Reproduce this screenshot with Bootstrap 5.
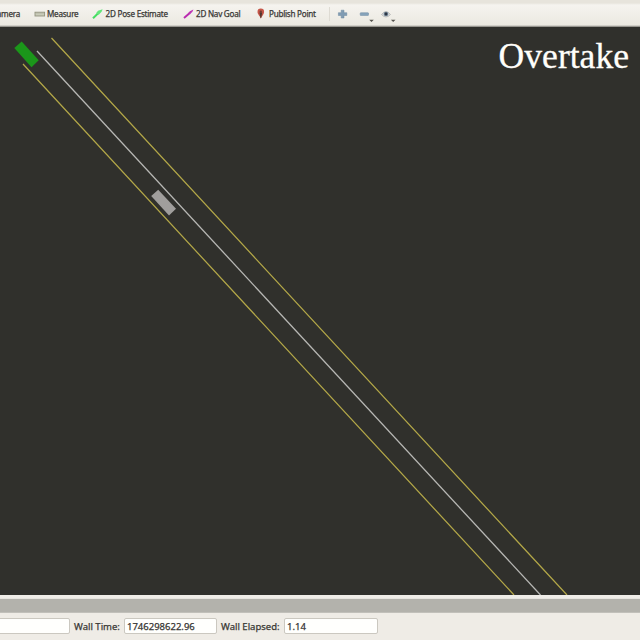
<!DOCTYPE html>
<html lang="en">
<head>
<meta charset="utf-8">
<meta name="viewport" content="width=device-width, initial-scale=1">
<title>Overtake</title>
<link href="https://cdn.jsdelivr.net/npm/bootstrap@5.3.0/dist/css/bootstrap.min.css" rel="stylesheet">
<style>
body{width:640px;height:640px;background:#efece6;color:#393835;font-family:"Noto Sans","Open Sans",sans-serif;font-size:8.1px;line-height:12px}
.tools{height:27px;background:linear-gradient(#e7e4dc 0 3px,#f5f3ef 5px,#ebe9e1 25px,#b8b6af 26px,#777670 27px)}
.tool{height:24px;white-space:nowrap;letter-spacing:-.24px;-webkit-text-stroke:.25px #393835}
.tool svg,.aux svg{display:block;flex:none}
.t-camera{width:34px}.t-camera span{margin-left:-12px;width:32px;text-align:right}
.t-measure{width:58px}.t-pose{width:91px}.t-nav{width:73px}.t-publish{width:73px}
.ico{width:13px}
.t-pose .ico{margin-right:.6px}
.divider{width:1px;height:14px;background:#dedbd3}
.viewport3d{height:568px;background:#30302c}
.viewport3d svg{display:block}
.heading{top:9px;right:11px;font:35.6px/40px "Liberation Serif",serif;color:#fffefa;-webkit-text-stroke:.3px #fffefa}
.splitter{height:18px;background:linear-gradient(#efede8 0 3px,#deddd7 4px,#b3b2ac 4px 17px,#d0cec8 18px)}
.timebar{height:27px;padding-top:5px;font-size:9.5px;-webkit-text-stroke:.25px #393835}
.field{height:16px;border:1px solid #cbc8c0;border-radius:2px;background:#fffffd;line-height:15px;padding-left:2px;color:#343330;white-space:nowrap}
.f-left{width:72px;margin-left:-2px}.f-time{width:93px}.f-elapsed{width:94px}
.l-time{width:54px;padding-left:4px}.l-elapsed{width:67px;padding-left:4px}
.timebar .lbl{height:16px;line-height:17px;white-space:nowrap}
</style>
<script src="https://cdn.jsdelivr.net/npm/bootstrap@5.3.0/dist/js/bootstrap.bundle.min.js"></script>
</head>
<body class="overflow-hidden d-flex flex-column m-0">
<header class="tools d-flex align-items-center flex-shrink-0">
  <div class="tool t-camera d-flex align-items-center overflow-hidden"><span>Camera</span></div>
  <div class="tool t-measure d-flex align-items-center">
    <svg class="ico" width="13" height="12" viewBox="0 0 13 12"><rect x="1" y="4.2" width="9.6" height="3.8" fill="#c9cbb9" stroke="#92937f" stroke-width=".9"/><path d="M3 4.5v1.5M5 4.5v1.5M7 4.5v1.5M9 4.5v1.5" stroke="#a2a391" stroke-width=".5"/></svg>
    <span>Measure</span></div>
  <div class="tool t-pose d-flex align-items-center">
    <svg class="ico" width="13" height="12" viewBox="0 0 13 12"><path d="M1 10.200 6.200 5.300" stroke="#45dd61" stroke-width="2"/><path d="M4 5.200 6 2.800 10.600 1.200 9.600 3.800 6.800 6.800z" fill="#62e67a"/></svg>
    <span>2D Pose Estimate</span></div>
  <div class="tool t-nav d-flex align-items-center">
    <svg class="ico" width="13" height="12" viewBox="0 0 13 12"><path d="M1 10 6.800 5" stroke="#b92baf" stroke-width="2"/><path d="M5.200 5.200 6.800 3.200 10.400 1.400 9.400 3.800 7 6.200z" fill="#bd35b4"/></svg>
    <span>2D Nav Goal</span></div>
  <div class="tool t-publish d-flex align-items-center">
    <svg class="ico" width="13" height="12" viewBox="0 0 13 12"><path d="M4.800 10.800C4.400 8 1.500 6.500 1.500 3.900a3.300 3.300 0 0 1 6.600 0C8.100 6.500 5.400 8 4.800 10.800z" fill="#c65648"/><path d="M3.500 4.600h2.700L5.200 10h-.7z" fill="#50382f"/><circle cx="4.800" cy="3.700" r="1.200" fill="#713d33"/></svg>
    <span>Publish Point</span></div>
  <div class="divider"></div>
  <div class="aux d-flex">
    <svg width="80" height="16" viewBox="330 6 80 16"><path d="M341.200 10.200h2.800v2.500h2.800v2.800H344V18h-2.800v-2.500h-2.800v-2.800h2.800z" fill="#809cb3" stroke="#6c899f" stroke-width=".5"/><rect x="360.200" y="12.700" width="8.300" height="2.800" rx=".6" fill="#86a3ba" stroke="#718da4" stroke-width=".5"/><path d="M369.200 19.800h4.600l-2.300 2.100zM390.900 19.800h4.600l-2.300 2.100z" fill="#55534e"/><path d="M381.500 14.500q4.500-6 9 0-4.500 5-9 0z" fill="#d5d8d9" stroke="#a6a7a6" stroke-width=".6"/><circle cx="386" cy="14" r="2.300" fill="#748798"/><circle cx="386" cy="14" r="1.400" fill="#2e3644"/></svg>
  </div>
</header>
<main class="viewport3d position-relative flex-shrink-0">
  <svg width="640" height="568" viewBox="0 27 640 568" fill="none">
    <path d="M51.500 38 567 595M23 64 514 595" stroke="#b3a748" stroke-width="1.250"/>
    <path d="M37 51 540.500 595" stroke="#b8b8b5" stroke-width="1.300"/>
    <path d="M14.300 48 21.700 41.500 38.700 60.300 31.500 67.300z" fill="#1b961a"/>
    <path d="M151.200 196 158.200 189.700 176 208.700 169 215.400z" fill="#a09e9c"/>
  </svg>
  <h1 class="heading position-absolute m-0">Overtake</h1>
</main>
<div class="splitter flex-shrink-0"></div>
<footer class="timebar d-flex align-items-start">
  <div class="field f-left"></div>
  <div class="lbl l-time">Wall Time:</div>
  <div class="field f-time">1746298622.96</div>
  <div class="lbl l-elapsed">Wall Elapsed:</div>
  <div class="field f-elapsed">1.14</div>
</footer>
</body>
</html>
